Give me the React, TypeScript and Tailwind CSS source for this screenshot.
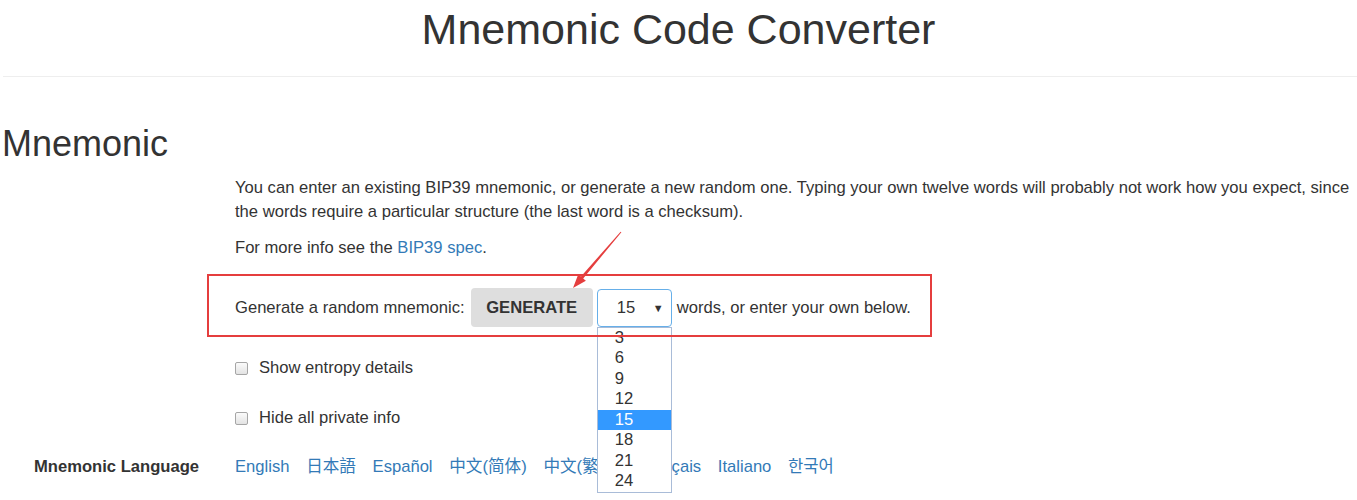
const languages = ["English", "日本語", "Español", "中文(简体)", "中文(繁體)", "Français", "Italiano", "한국어"]
const wordCounts = ["3", "6", "9", "12", "15", "18", "21", "24"]

function Checkbox({ label }: { label: string }) {
  return (
    <label className="flex h-[24px] items-center gap-[11px]">
      <span className="h-[13px] w-[13px] rounded-[2px] border border-[#a6a6a6] bg-gradient-to-b from-[#fbfbfb] to-[#e3e3e3]" />
      <span>{label}</span>
    </label>
  )
}

export default function App() {
  return (
    <div className="min-h-[500px] overflow-hidden bg-white font-['Liberation_Sans','Noto_Sans_CJK_SC',sans-serif] text-[16.6px] leading-[24px] text-[#333]">
      {/* Header */}
      <h1 className="pt-[6px] text-center text-[43px] leading-[47px]">Mnemonic Code Converter</h1>
      <hr className="ml-[3px] mt-[23px] border-0 border-t border-[#eee]" />

      {/* Mnemonic section */}
      <h2 className="mt-[47px] pl-[2px] text-[36px] leading-[40px]">Mnemonic</h2>

      <div className="mt-[12px] grid grid-cols-[235px_1fr]">
        <div />
        <div>
          <p>
            You can enter an existing BIP39 mnemonic, or generate a new random one. Typing your own twelve words will
            probably not work how you expect, since the words require a particular structure (the last word is a
            checksum).
          </p>
          <p className="mt-[12px]">
            For more info see the <a className="text-[#337ab7]">BIP39 spec</a>.
          </p>

          {/* Generate row */}
          <div className="relative mt-[28px] flex h-[39px] items-center">
            <span>Generate a random mnemonic:</span>
            <button className="ml-[6px] h-[39px] w-[122px] rounded-[4px] bg-[#dedede] font-bold text-[#333]">
              GENERATE
            </button>
            <div className="relative ml-[4px]">
              <div className="flex h-[38px] w-[75px] items-center justify-between rounded-[4px] border border-[#66afe9] bg-white pl-[19px] pr-[7px]">
                <span>15</span>
                <span className="text-[11px]">▼</span>
              </div>
              <ul className="absolute left-0 top-full z-10 w-[75px] border border-[#a9bcd8] bg-white">
                {wordCounts.map((w) => (
                  <li
                    key={w}
                    className={
                      w === "15"
                        ? "h-[20.5px] bg-[#3399ff] pl-[17px] leading-[20.5px] text-white"
                        : "h-[20.5px] pl-[17px] leading-[20.5px]"
                    }
                  >
                    {w}
                  </li>
                ))}
              </ul>
            </div>
            <span className="ml-[5px]">words, or enter your own below.</span>

            {/* annotation */}
            <div className="pointer-events-none absolute left-[-28px] top-[-14px] z-20 h-[63px] w-[725px] border-2 border-[#e53e3e]" />
            <svg
              className="pointer-events-none absolute left-[335px] top-[-59px] z-20"
              width="55"
              height="62"
              viewBox="0 0 55 62"
            >
              <polygon
                points="50.6,2.7 51.4,3.3 13.2,49.4 15.9,51.65 3,59 8.3,45.2 11,47.4"
                fill="#e53e3e"
              />
            </svg>
          </div>

          <div className="mt-[29px]">
            <Checkbox label="Show entropy details" />
          </div>
          <div className="mt-[26px]">
            <Checkbox label="Hide all private info" />
          </div>
        </div>
      </div>

      {/* Language row */}
      <div className="mt-[25px] grid grid-cols-[235px_1fr] items-center">
        <div className="pr-[36px] text-right font-bold">Mnemonic Language</div>
        <div className="flex gap-[16.7px]">
          {languages.map((l) => (
            <a key={l} className="text-[#337ab7]">
              {l}
            </a>
          ))}
        </div>
      </div>
    </div>
  )
}
